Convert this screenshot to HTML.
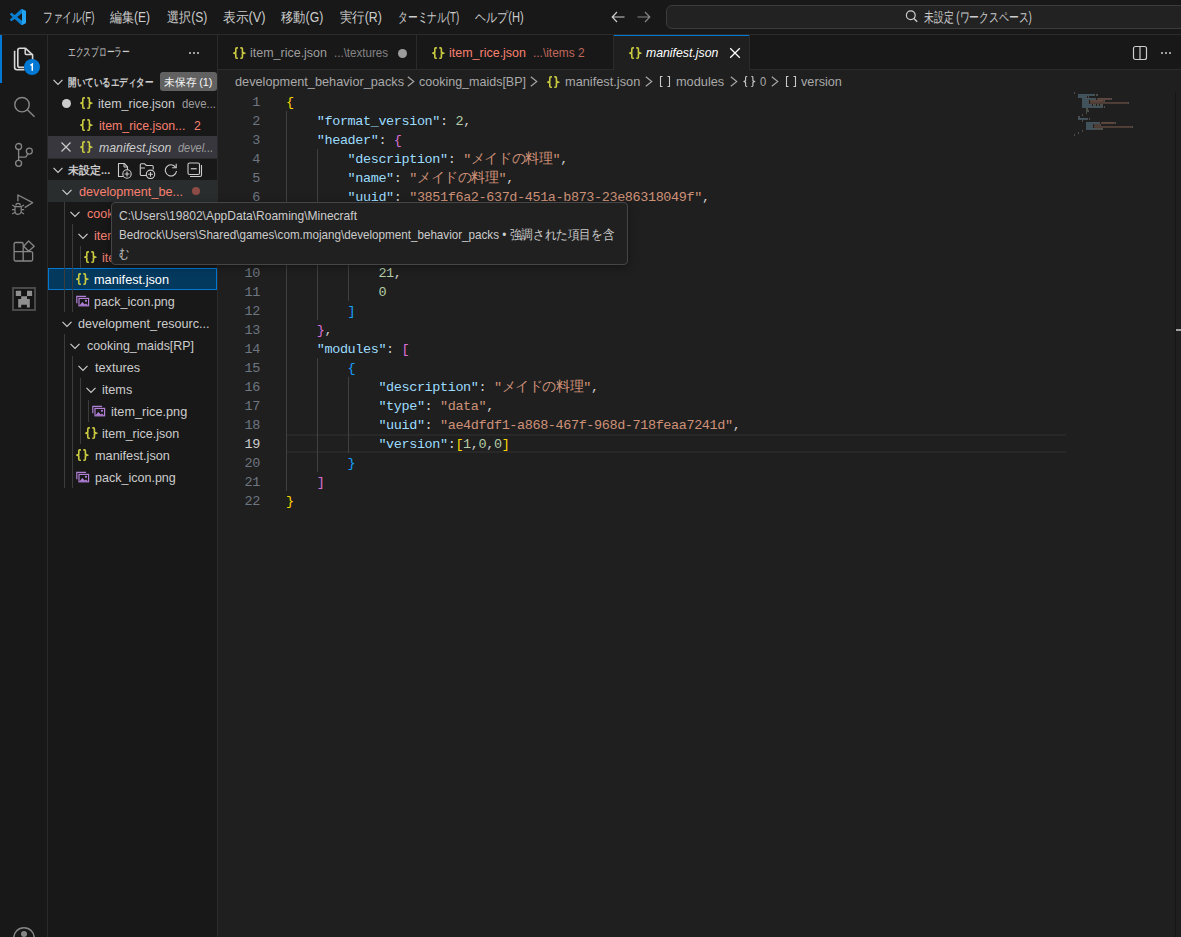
<!DOCTYPE html>
<html><head><meta charset="utf-8"><style>
html,body{margin:0;padding:0;width:1181px;height:937px;overflow:hidden;background:#1f1f1f}
.a{position:absolute}
.t{white-space:pre}
.code{font:13.5px 'Liberation Mono', monospace;letter-spacing:-0.4px;line-height:19px;height:19px;white-space:pre;margin-top:1px}
</style></head><body>
<div class="a" style="left:0px;top:0px;width:1181px;height:35px;background:#181818;"></div>
<div class="a" style="left:0px;top:34px;width:1181px;height:1px;background:#2b2b2b;"></div>
<div class="a" style="left:0px;top:35px;width:47px;height:902px;background:#181818;"></div>
<div class="a" style="left:47px;top:35px;width:1px;height:902px;background:#2b2b2b;"></div>
<div class="a" style="left:48px;top:35px;width:169px;height:902px;background:#181818;"></div>
<div class="a" style="left:217px;top:35px;width:1px;height:902px;background:#2b2b2b;"></div>
<div class="a" style="left:218px;top:35px;width:963px;height:902px;background:#1f1f1f;"></div>
<svg class="a" style="left:10px;top:9px;" width="16" height="16" viewBox="0 0 16 16"><g transform="scale(0.16)"><path d="M96.46 10.8 L75.86 0.87 C73.47 -0.28 70.62 0.2 68.75 2.07 L29.27 38.1 L12.07 25.05 C10.47 23.83 8.23 23.93 6.74 25.28 L1.23 30.29 C-0.58 31.94 -0.58 34.8 1.23 36.45 L16.14 50.05 L1.23 63.65 C-0.58 65.3 -0.58 68.16 1.23 69.81 L6.74 74.82 C8.23 76.17 10.47 76.27 12.07 75.05 L29.27 62 L68.75 98.03 C70.62 99.9 73.47 100.38 75.86 99.23 L96.46 89.3 C98.62 88.26 100 86.07 100 83.67 V16.43 C100 14.03 98.62 11.84 96.46 10.8 Z M75.02 27.3 L45.07 50.05 L75.02 72.8 Z" fill="#0a7fd0" fill-rule="evenodd"/><path d="M75.86 0.87 L96.46 10.8 C98.62 11.84 100 14.03 100 16.43 V83.67 C100 86.07 98.62 88.26 96.46 89.3 L75.86 99.23 C73.47 100.38 70.62 99.9 68.75 98.03 C71.1 100.4 75.02 98.7 75.02 95.4 V4.7 C75.02 1.4 71.1 -0.3 68.75 2.07 Z" fill="#22a4f2"/></g></svg>
<div class="a t" style="left:42.6px;top:0px;height:35px;font:normal normal 14px 'Liberation Sans', sans-serif;line-height:35px;color:#cccccc;transform:scaleX(0.6958);transform-origin:0 0;">ファイル(F)</div>
<div class="a t" style="left:110px;top:0px;height:35px;font:normal normal 14px 'Liberation Sans', sans-serif;line-height:35px;color:#cccccc;transform:scaleX(0.8572);transform-origin:0 0;">編集(E)</div>
<div class="a t" style="left:166.7px;top:0px;height:35px;font:normal normal 14px 'Liberation Sans', sans-serif;line-height:35px;color:#cccccc;transform:scaleX(0.8637);transform-origin:0 0;">選択(S)</div>
<div class="a t" style="left:223px;top:0px;height:35px;font:normal normal 14px 'Liberation Sans', sans-serif;line-height:35px;color:#cccccc;transform:scaleX(0.9108);transform-origin:0 0;">表示(V)</div>
<div class="a t" style="left:281.4px;top:0px;height:35px;font:normal normal 14px 'Liberation Sans', sans-serif;line-height:35px;color:#cccccc;transform:scaleX(0.8773);transform-origin:0 0;">移動(G)</div>
<div class="a t" style="left:339.7px;top:0px;height:35px;font:normal normal 14px 'Liberation Sans', sans-serif;line-height:35px;color:#cccccc;transform:scaleX(0.8833);transform-origin:0 0;">実行(R)</div>
<div class="a t" style="left:398px;top:0px;height:35px;font:normal normal 14px 'Liberation Sans', sans-serif;line-height:35px;color:#cccccc;transform:scaleX(0.6976);transform-origin:0 0;">ターミナル(T)</div>
<div class="a t" style="left:474.6px;top:0px;height:35px;font:normal normal 14px 'Liberation Sans', sans-serif;line-height:35px;color:#cccccc;transform:scaleX(0.7927);transform-origin:0 0;">ヘルプ(H)</div>
<svg class="a" style="left:611px;top:11px;" width="14" height="12" viewBox="0 0 14 12"><path d="M6 1 L1.2 6 L6 11 M1.5 6 H13.5" stroke="#cccccc" stroke-width="1.2" fill="none"/></svg>
<svg class="a" style="left:637px;top:11px;" width="14" height="12" viewBox="0 0 14 12"><path d="M8 1 L12.8 6 L8 11 M12.5 6 H0.5" stroke="#868686" stroke-width="1.2" fill="none"/></svg>
<div class="a" style="left:666px;top:5px;width:560px;height:24px;background:#222222;border:1px solid #3b3b3b;border-radius:6px;box-sizing:border-box;"></div>
<svg class="a" style="left:904px;top:10px;transform:scaleX(-1);" width="14" height="13" viewBox="0 0 14 13"><circle cx="7.2" cy="5.3" r="4.4" stroke="#cccccc" stroke-width="1.2" fill="none"/><path d="M4.1 8.4 L0.8 11.7" stroke="#cccccc" stroke-width="1.4"/></svg>
<div class="a t" style="left:924px;top:5px;height:24px;font:normal normal 14px 'Liberation Sans', sans-serif;line-height:24px;color:#cccccc;transform:scaleX(0.7029);transform-origin:0 0;">未設定 (ワークスペース)</div>
<div class="a" style="left:0px;top:35px;width:2px;height:48px;background:#0078d4;"></div>
<svg class="a" style="left:8px;top:42px;" width="34" height="36" viewBox="0 0 34 36"><path d="M9.8 16 V8.3 a2 2 0 0 1 2 -2 H17.6 L24.6 12.8 V18 M9.8 16 V23.4 a2 2 0 0 0 2 2 H16" stroke="#d7d7d7" stroke-width="1.6" fill="none" stroke-linejoin="round"/><path d="M17.2 6.3 V11.6 a1 1 0 0 0 1 1 H24.6" stroke="#d7d7d7" stroke-width="1.5" fill="none"/><path d="M6.6 8.8 V25.3 a2.5 2.5 0 0 0 2.5 2.5 H16.5" stroke="#d7d7d7" stroke-width="1.6" fill="none"/><circle cx="24" cy="25" r="8" fill="#0078d4"/><path d="M22.4 23.4 L24.3 22.2 V28.7" stroke="#ffffff" stroke-width="1.5" fill="none"/></svg>
<svg class="a" style="left:12px;top:95px;" width="24" height="24" viewBox="0 0 24 24"><circle cx="10" cy="9.7" r="7.2" stroke="#868686" stroke-width="1.4" fill="none"/><path d="M15.3 14.8 L22.5 21.8" stroke="#868686" stroke-width="1.5"/></svg>
<svg class="a" style="left:12px;top:141px;" width="24" height="26" viewBox="0 0 24 26"><circle cx="6.6" cy="5.5" r="3" stroke="#868686" stroke-width="1.3" fill="none"/><circle cx="6.6" cy="22.3" r="3" stroke="#868686" stroke-width="1.3" fill="none"/><circle cx="17.3" cy="10.1" r="3" stroke="#868686" stroke-width="1.3" fill="none"/><path d="M6.6 8.5 V19.3 M15.8 12.7 L14.6 14.9 a2 2 0 0 1 -1.8 1.2 H6.6" stroke="#868686" stroke-width="1.3" fill="none"/></svg>
<svg class="a" style="left:11px;top:193px;" width="24" height="24" viewBox="0 0 24 24"><path d="M6.9 8.3 V2 L21.6 9.7 L13.7 14.6" stroke="#868686" stroke-width="1.3" fill="none" stroke-linejoin="round"/><path d="M4.8 12.6 a2.3 2.3 0 0 1 4.6 0 M4 13.6 H10.2 V18.2 a3.1 3.1 0 0 1 -6.2 0 Z" stroke="#868686" stroke-width="1.2" fill="none"/><path d="M1.2 12 L4 13.8 M13 12 L10.2 13.8 M1 16.6 H4 M13.2 16.6 H10.2 M1.2 21 L4 19.3 M13 21 L10.2 19.3" stroke="#868686" stroke-width="1.1" fill="none"/></svg>
<svg class="a" style="left:12px;top:239px;" width="24" height="24" viewBox="0 0 24 24"><path d="M11.2 12.6 V4.9 a1.4 1.4 0 0 0 -1.4 -1.4 H3.5 a1.4 1.4 0 0 0 -1.4 1.4 V20.6 a1.4 1.4 0 0 0 1.4 1.4 H19.2 a1.4 1.4 0 0 0 1.4 -1.4 V14 a1.4 1.4 0 0 0 -1.4 -1.4 H2.1 M11.2 12.6 V22" stroke="#868686" stroke-width="1.3" fill="none"/><path d="M16.6 2 L22.2 7.3 L16.6 12.2 L11.7 7.3 Z" stroke="#868686" stroke-width="1.3" fill="none" stroke-linejoin="round"/></svg>
<svg class="a" style="left:12px;top:287px;" width="24" height="24" viewBox="0 0 24 24"><rect x="1" y="1" width="22" height="22" stroke="#4a4a4a" stroke-width="2" fill="#141414"/><path d="M3.8 3.7 H9.1 V9 H3.8 Z M15 3.7 H20.1 V9 H15 Z M9.2 9.3 H15 V12 H17.8 V20.4 H14.9 V17.7 H9.2 V20.4 H6.2 V12 H9.2 Z" fill="#8f8f8f"/></svg>
<svg class="a" style="left:12px;top:925px;" width="24" height="12" viewBox="0 0 24 12"><circle cx="12" cy="13" r="10.3" stroke="#868686" stroke-width="1.5" fill="none"/><circle cx="12" cy="9" r="3" fill="#868686"/></svg>
<div class="a t" style="left:68.3px;top:35px;height:35px;font:normal normal 12px 'Liberation Sans', sans-serif;line-height:35px;color:#cccccc;transform:scaleX(0.6458);transform-origin:0 0;">エクスプローラー</div>
<div class="a" style="left:189px;top:52px;width:2px;height:2px;background:#cccccc;border-radius:1px;"></div>
<div class="a" style="left:193px;top:52px;width:2px;height:2px;background:#cccccc;border-radius:1px;"></div>
<div class="a" style="left:197px;top:52px;width:2px;height:2px;background:#cccccc;border-radius:1px;"></div>
<svg class="a" style="left:49.7px;top:73.5px;" width="16" height="16" viewBox="0 0 16 16"><path d="M3.5 5.8 L8 10.3 L12.5 5.8" stroke="#cccccc" stroke-width="1.2" fill="none"/></svg>
<div class="a t" style="left:68.3px;top:71px;height:22px;font:normal bold 11px 'Liberation Sans', sans-serif;line-height:22px;color:#cccccc;transform:scaleX(0.7764);transform-origin:0 0;">開いているエディター</div>
<div class="a" style="left:160px;top:72px;width:57px;height:19px;background:#616161;border-radius:3px;"></div>
<div class="a t" style="left:164.4px;top:72.5px;height:19px;font:normal normal 11px 'Liberation Sans', sans-serif;line-height:19px;color:#f8f8f8;transform:scaleX(0.9778);transform-origin:0 0;">未保存 (1)</div>
<div class="a" style="left:61.5px;top:98.5px;width:9px;height:9px;border-radius:5px;background:#cccccc"></div>
<svg class="a" style="left:80.3px;top:97px;" width="13" height="13" viewBox="0 0 13 13"><path d="M4.9 0.9 H3.8 Q2.8 0.9 2.8 1.9 V5.2 L0.9 6.1 L2.8 7 V10.3 Q2.8 11.3 3.8 11.3 H4.9 M7.3 0.9 H8.4 Q9.4 0.9 9.4 1.9 V5.2 L11.3 6.1 L9.4 7 V10.3 Q9.4 11.3 8.4 11.3 H7.3" stroke="#cbcb41" stroke-width="1.6" fill="none" stroke-linejoin="miter"/></svg>
<div class="a t" style="left:98.4px;top:93px;height:22px;font:normal normal 13px 'Liberation Sans', sans-serif;line-height:22px;color:#cccccc;transform:scaleX(0.9601);transform-origin:0 0;">item_rice.json</div>
<div class="a t" style="left:181.9px;top:93px;height:22px;font:normal normal 12px 'Liberation Sans', sans-serif;line-height:22px;color:#9d9d9d;transform:scaleX(0.9438);transform-origin:0 0;">deve...</div>
<svg class="a" style="left:80.3px;top:119px;" width="13" height="13" viewBox="0 0 13 13"><path d="M4.9 0.9 H3.8 Q2.8 0.9 2.8 1.9 V5.2 L0.9 6.1 L2.8 7 V10.3 Q2.8 11.3 3.8 11.3 H4.9 M7.3 0.9 H8.4 Q9.4 0.9 9.4 1.9 V5.2 L11.3 6.1 L9.4 7 V10.3 Q9.4 11.3 8.4 11.3 H7.3" stroke="#cbcb41" stroke-width="1.6" fill="none" stroke-linejoin="miter"/></svg>
<div class="a t" style="left:98.6px;top:115px;height:22px;font:normal normal 13px 'Liberation Sans', sans-serif;line-height:22px;color:#f88070;transform:scaleX(0.9491);transform-origin:0 0;">item_rice.json...</div>
<div class="a t" style="left:194.2px;top:115px;height:22px;font:normal normal 12px 'Liberation Sans', sans-serif;line-height:22px;color:#f88070;transform:scaleX(1.0189);transform-origin:0 0;">2</div>
<div class="a" style="left:48px;top:136px;width:169px;height:22px;background:#37373d;"></div>
<svg class="a" style="left:60px;top:141px;" width="12" height="12" viewBox="0 0 12 12"><path d="M1.5 1.5 L10.5 10.5 M10.5 1.5 L1.5 10.5" stroke="#cccccc" stroke-width="1.2"/></svg>
<svg class="a" style="left:80.3px;top:141px;" width="13" height="13" viewBox="0 0 13 13"><path d="M4.9 0.9 H3.8 Q2.8 0.9 2.8 1.9 V5.2 L0.9 6.1 L2.8 7 V10.3 Q2.8 11.3 3.8 11.3 H4.9 M7.3 0.9 H8.4 Q9.4 0.9 9.4 1.9 V5.2 L11.3 6.1 L9.4 7 V10.3 Q9.4 11.3 8.4 11.3 H7.3" stroke="#cbcb41" stroke-width="1.6" fill="none" stroke-linejoin="miter"/></svg>
<div class="a t" style="left:98.6px;top:137px;height:22px;font:italic normal 13px 'Liberation Sans', sans-serif;line-height:22px;color:#cccccc;transform:scaleX(0.9453);transform-origin:0 0;">manifest.json</div>
<div class="a t" style="left:177.5px;top:137px;height:22px;font:italic normal 12px 'Liberation Sans', sans-serif;line-height:22px;color:#9d9d9d;transform:scaleX(0.9098);transform-origin:0 0;">devel...</div>
<div class="a" style="left:48px;top:158px;width:169px;height:1px;background:#2b2b2b;"></div>
<svg class="a" style="left:49.7px;top:161.5px;" width="16" height="16" viewBox="0 0 16 16"><path d="M3.5 5.8 L8 10.3 L12.5 5.8" stroke="#cccccc" stroke-width="1.2" fill="none"/></svg>
<div class="a t" style="left:68.3px;top:159px;height:22px;font:normal bold 11px 'Liberation Sans', sans-serif;line-height:22px;color:#cccccc;transform:scaleX(1.0007);transform-origin:0 0;">未設定...</div>
<svg class="a" style="left:117px;top:162px;" width="16" height="17" viewBox="0 0 16 17"><path d="M6 14.5 H1.5 V1.5 H7.2 L10.5 4.8 V8" stroke="#cccccc" stroke-width="1.1" fill="none" stroke-linejoin="round"/><path d="M7 1.5 V5 H10.5" stroke="#cccccc" stroke-width="1" fill="none"/><circle cx="10" cy="12" r="4.2" fill="#181818" stroke="#cccccc" stroke-width="1.1"/><path d="M10 9.6 V14.4 M7.6 12 H12.4" stroke="#cccccc" stroke-width="1.1"/></svg>
<svg class="a" style="left:139px;top:162px;" width="18" height="17" viewBox="0 0 18 17"><path d="M7 13.5 H2.5 a1.2 1.2 0 0 1 -1.2 -1.2 V3 a1.2 1.2 0 0 1 1.2 -1.2 H5.5 L7.3 3.5 H13 a1.2 1.2 0 0 1 1.2 1.2 V7.5" stroke="#cccccc" stroke-width="1.1" fill="none"/><path d="M1.5 6 H6" stroke="#cccccc" stroke-width="1"/><circle cx="11.5" cy="12.3" r="4.2" fill="#181818" stroke="#cccccc" stroke-width="1.1"/><path d="M11.5 9.9 V14.7 M9.1 12.3 H13.9" stroke="#cccccc" stroke-width="1.1"/></svg>
<svg class="a" style="left:164px;top:163px;" width="14" height="14" viewBox="0 0 14 14"><path d="M11.6 4.3 A5.6 5.6 0 1 0 12.5 8" stroke="#cccccc" stroke-width="1.1" fill="none"/><path d="M12.2 0.8 V4.8 H8.2" stroke="#cccccc" stroke-width="1.1" fill="none"/></svg>
<svg class="a" style="left:187px;top:162px;" width="16" height="16" viewBox="0 0 16 16"><rect x="1" y="1" width="11.5" height="11.5" rx="1.5" stroke="#cccccc" stroke-width="1.1" fill="none"/><path d="M14.5 3 V13 A1.5 1.5 0 0 1 13 14.5 H3" stroke="#cccccc" stroke-width="1.1" fill="none"/><path d="M3.8 6.75 H9.7" stroke="#cccccc" stroke-width="1.2"/></svg>
<div class="a" style="left:48px;top:180px;width:169px;height:22px;background:#2a2d2e;"></div>
<svg class="a" style="left:59.400000000000006px;top:183.5px;" width="16" height="16" viewBox="0 0 16 16"><path d="M3.5 5.8 L8 10.3 L12.5 5.8" stroke="#cccccc" stroke-width="1.2" fill="none"/></svg>
<div class="a t" style="left:78.8px;top:181px;height:22px;font:normal normal 13px 'Liberation Sans', sans-serif;line-height:22px;color:#f88070;transform:scaleX(0.9723);transform-origin:0 0;">development_be...</div>
<div class="a" style="left:192px;top:187px;width:8px;height:8px;border-radius:4px;background:#8c4c45"></div>
<svg class="a" style="left:66.9px;top:205.5px;" width="16" height="16" viewBox="0 0 16 16"><path d="M3.5 5.8 L8 10.3 L12.5 5.8" stroke="#cccccc" stroke-width="1.2" fill="none"/></svg>
<div class="a t" style="left:86.6px;top:203px;height:22px;font:normal normal 13px 'Liberation Sans', sans-serif;line-height:22px;color:#f88070;transform:scaleX(0.9615);transform-origin:0 0;">cooking_maids[BP]</div>
<svg class="a" style="left:75px;top:227.5px;" width="16" height="16" viewBox="0 0 16 16"><path d="M3.5 5.8 L8 10.3 L12.5 5.8" stroke="#cccccc" stroke-width="1.2" fill="none"/></svg>
<div class="a t" style="left:94.3px;top:225px;height:22px;font:normal normal 13px 'Liberation Sans', sans-serif;line-height:22px;color:#f88070;transform:scaleX(0.9723);transform-origin:0 0;">items</div>
<svg class="a" style="left:84.4px;top:251px;" width="13" height="13" viewBox="0 0 13 13"><path d="M4.9 0.9 H3.8 Q2.8 0.9 2.8 1.9 V5.2 L0.9 6.1 L2.8 7 V10.3 Q2.8 11.3 3.8 11.3 H4.9 M7.3 0.9 H8.4 Q9.4 0.9 9.4 1.9 V5.2 L11.3 6.1 L9.4 7 V10.3 Q9.4 11.3 8.4 11.3 H7.3" stroke="#cbcb41" stroke-width="1.6" fill="none" stroke-linejoin="miter"/></svg>
<div class="a t" style="left:102.2px;top:247px;height:22px;font:normal normal 13px 'Liberation Sans', sans-serif;line-height:22px;color:#f88070;transform:scaleX(0.9601);transform-origin:0 0;">item_rice.json</div>
<div class="a" style="left:48px;top:268px;width:169px;height:22px;background:#04395e;border:1px solid #0078d4;box-sizing:border-box;"></div>
<svg class="a" style="left:76.3px;top:273px;" width="13" height="13" viewBox="0 0 13 13"><path d="M4.9 0.9 H3.8 Q2.8 0.9 2.8 1.9 V5.2 L0.9 6.1 L2.8 7 V10.3 Q2.8 11.3 3.8 11.3 H4.9 M7.3 0.9 H8.4 Q9.4 0.9 9.4 1.9 V5.2 L11.3 6.1 L9.4 7 V10.3 Q9.4 11.3 8.4 11.3 H7.3" stroke="#cbcb41" stroke-width="1.6" fill="none" stroke-linejoin="miter"/></svg>
<div class="a t" style="left:94.4px;top:269px;height:22px;font:normal normal 13px 'Liberation Sans', sans-serif;line-height:22px;color:#ffffff;transform:scaleX(0.9792);transform-origin:0 0;">manifest.json</div>
<svg class="a" style="left:75.7px;top:295px;" width="14" height="13" viewBox="0 0 14 13"><path d="M0.8 8.2 V1.4 H10" stroke="#b07fd6" stroke-width="1.2" fill="none"/><rect x="3" y="3.4" width="9.6" height="7.4" stroke="#b07fd6" stroke-width="1.2" fill="none"/><path d="M3.4 10.6 L6.3 6.9 L8.8 9.6 L10 8.5 L12.4 10.6 Z" fill="#b07fd6"/><circle cx="10" cy="5.8" r="1.1" fill="#b07fd6"/></svg>
<div class="a t" style="left:94.4px;top:291px;height:22px;font:normal normal 13px 'Liberation Sans', sans-serif;line-height:22px;color:#cccccc;transform:scaleX(0.9637);transform-origin:0 0;">pack_icon.png</div>
<div class="a" style="left:64px;top:202px;width:1px;height:110px;background:#3c3c3c;"></div>
<div class="a" style="left:72px;top:224px;width:1px;height:88px;background:#3c3c3c;"></div>
<div class="a" style="left:80px;top:246px;width:1px;height:22px;background:#3c3c3c;"></div>
<svg class="a" style="left:58.599999999999994px;top:315.5px;" width="16" height="16" viewBox="0 0 16 16"><path d="M3.5 5.8 L8 10.3 L12.5 5.8" stroke="#cccccc" stroke-width="1.2" fill="none"/></svg>
<div class="a t" style="left:78.4px;top:313px;height:22px;font:normal normal 13px 'Liberation Sans', sans-serif;line-height:22px;color:#cccccc;transform:scaleX(0.9687);transform-origin:0 0;">development_resourc...</div>
<svg class="a" style="left:66.9px;top:337.5px;" width="16" height="16" viewBox="0 0 16 16"><path d="M3.5 5.8 L8 10.3 L12.5 5.8" stroke="#cccccc" stroke-width="1.2" fill="none"/></svg>
<div class="a t" style="left:86.5px;top:335px;height:22px;font:normal normal 13px 'Liberation Sans', sans-serif;line-height:22px;color:#cccccc;transform:scaleX(0.9554);transform-origin:0 0;">cooking_maids[RP]</div>
<svg class="a" style="left:75px;top:359.5px;" width="16" height="16" viewBox="0 0 16 16"><path d="M3.5 5.8 L8 10.3 L12.5 5.8" stroke="#cccccc" stroke-width="1.2" fill="none"/></svg>
<div class="a t" style="left:94.5px;top:357px;height:22px;font:normal normal 13px 'Liberation Sans', sans-serif;line-height:22px;color:#cccccc;transform:scaleX(0.9775);transform-origin:0 0;">textures</div>
<svg class="a" style="left:82.9px;top:381.5px;" width="16" height="16" viewBox="0 0 16 16"><path d="M3.5 5.8 L8 10.3 L12.5 5.8" stroke="#cccccc" stroke-width="1.2" fill="none"/></svg>
<div class="a t" style="left:102.4px;top:379px;height:22px;font:normal normal 13px 'Liberation Sans', sans-serif;line-height:22px;color:#cccccc;transform:scaleX(0.9723);transform-origin:0 0;">items</div>
<svg class="a" style="left:91.8px;top:405px;" width="14" height="13" viewBox="0 0 14 13"><path d="M0.8 8.2 V1.4 H10" stroke="#b07fd6" stroke-width="1.2" fill="none"/><rect x="3" y="3.4" width="9.6" height="7.4" stroke="#b07fd6" stroke-width="1.2" fill="none"/><path d="M3.4 10.6 L6.3 6.9 L8.8 9.6 L10 8.5 L12.4 10.6 Z" fill="#b07fd6"/><circle cx="10" cy="5.8" r="1.1" fill="#b07fd6"/></svg>
<div class="a t" style="left:110.5px;top:401px;height:22px;font:normal normal 13px 'Liberation Sans', sans-serif;line-height:22px;color:#cccccc;transform:scaleX(0.9764);transform-origin:0 0;">item_rice.png</div>
<svg class="a" style="left:84.5px;top:427px;" width="13" height="13" viewBox="0 0 13 13"><path d="M4.9 0.9 H3.8 Q2.8 0.9 2.8 1.9 V5.2 L0.9 6.1 L2.8 7 V10.3 Q2.8 11.3 3.8 11.3 H4.9 M7.3 0.9 H8.4 Q9.4 0.9 9.4 1.9 V5.2 L11.3 6.1 L9.4 7 V10.3 Q9.4 11.3 8.4 11.3 H7.3" stroke="#cbcb41" stroke-width="1.6" fill="none" stroke-linejoin="miter"/></svg>
<div class="a t" style="left:102.4px;top:423px;height:22px;font:normal normal 13px 'Liberation Sans', sans-serif;line-height:22px;color:#cccccc;transform:scaleX(0.9626);transform-origin:0 0;">item_rice.json</div>
<svg class="a" style="left:76.3px;top:449px;" width="13" height="13" viewBox="0 0 13 13"><path d="M4.9 0.9 H3.8 Q2.8 0.9 2.8 1.9 V5.2 L0.9 6.1 L2.8 7 V10.3 Q2.8 11.3 3.8 11.3 H4.9 M7.3 0.9 H8.4 Q9.4 0.9 9.4 1.9 V5.2 L11.3 6.1 L9.4 7 V10.3 Q9.4 11.3 8.4 11.3 H7.3" stroke="#cbcb41" stroke-width="1.6" fill="none" stroke-linejoin="miter"/></svg>
<div class="a t" style="left:94.5px;top:445px;height:22px;font:normal normal 13px 'Liberation Sans', sans-serif;line-height:22px;color:#cccccc;transform:scaleX(0.9779);transform-origin:0 0;">manifest.json</div>
<svg class="a" style="left:75.7px;top:471px;" width="14" height="13" viewBox="0 0 14 13"><path d="M0.8 8.2 V1.4 H10" stroke="#b07fd6" stroke-width="1.2" fill="none"/><rect x="3" y="3.4" width="9.6" height="7.4" stroke="#b07fd6" stroke-width="1.2" fill="none"/><path d="M3.4 10.6 L6.3 6.9 L8.8 9.6 L10 8.5 L12.4 10.6 Z" fill="#b07fd6"/><circle cx="10" cy="5.8" r="1.1" fill="#b07fd6"/></svg>
<div class="a t" style="left:94.5px;top:467px;height:22px;font:normal normal 13px 'Liberation Sans', sans-serif;line-height:22px;color:#cccccc;transform:scaleX(0.9637);transform-origin:0 0;">pack_icon.png</div>
<div class="a" style="left:64px;top:334px;width:1px;height:154px;background:#3c3c3c;"></div>
<div class="a" style="left:72px;top:356px;width:1px;height:132px;background:#3c3c3c;"></div>
<div class="a" style="left:80px;top:378px;width:1px;height:66px;background:#3c3c3c;"></div>
<div class="a" style="left:88px;top:400px;width:1px;height:22px;background:#3c3c3c;"></div>
<div class="a" style="left:218px;top:35px;width:963px;height:34px;background:#181818;"></div>
<div class="a" style="left:218px;top:69px;width:963px;height:1px;background:#2b2b2b;"></div>
<div class="a" style="left:416px;top:35px;width:1px;height:34px;background:#2b2b2b;"></div>
<div class="a" style="left:613px;top:35px;width:1px;height:34px;background:#2b2b2b;"></div>
<div class="a" style="left:614px;top:35px;width:135px;height:35px;background:#1f1f1f;"></div>
<div class="a" style="left:614px;top:35px;width:135px;height:1px;background:#0078d4;"></div>
<div class="a" style="left:749px;top:35px;width:1px;height:34px;background:#2b2b2b;"></div>
<svg class="a" style="left:232.5px;top:46.5px;" width="13" height="13" viewBox="0 0 13 13"><path d="M4.9 0.9 H3.8 Q2.8 0.9 2.8 1.9 V5.2 L0.9 6.1 L2.8 7 V10.3 Q2.8 11.3 3.8 11.3 H4.9 M7.3 0.9 H8.4 Q9.4 0.9 9.4 1.9 V5.2 L11.3 6.1 L9.4 7 V10.3 Q9.4 11.3 8.4 11.3 H7.3" stroke="#cbcb41" stroke-width="1.6" fill="none" stroke-linejoin="miter"/></svg>
<div class="a t" style="left:250px;top:36px;height:34px;font:normal normal 13px 'Liberation Sans', sans-serif;line-height:34px;color:#9d9d9d;transform:scaleX(0.9601);transform-origin:0 0;">item_rice.json</div>
<div class="a t" style="left:334px;top:36px;height:34px;font:normal normal 12px 'Liberation Sans', sans-serif;line-height:34px;color:#848484;transform:scaleX(0.9639);transform-origin:0 0;">...\textures</div>
<div class="a" style="left:398px;top:48.5px;width:9px;height:9px;border-radius:5px;background:#9d9d9d"></div>
<svg class="a" style="left:432px;top:46.5px;" width="13" height="13" viewBox="0 0 13 13"><path d="M4.9 0.9 H3.8 Q2.8 0.9 2.8 1.9 V5.2 L0.9 6.1 L2.8 7 V10.3 Q2.8 11.3 3.8 11.3 H4.9 M7.3 0.9 H8.4 Q9.4 0.9 9.4 1.9 V5.2 L11.3 6.1 L9.4 7 V10.3 Q9.4 11.3 8.4 11.3 H7.3" stroke="#cbcb41" stroke-width="1.6" fill="none" stroke-linejoin="miter"/></svg>
<div class="a t" style="left:449.4px;top:36px;height:34px;font:normal normal 13px 'Liberation Sans', sans-serif;line-height:34px;color:#f88070;transform:scaleX(0.9601);transform-origin:0 0;">item_rice.json</div>
<div class="a t" style="left:533px;top:36px;height:34px;font:normal normal 12px 'Liberation Sans', sans-serif;line-height:34px;color:#c0685c;transform:scaleX(0.9901);transform-origin:0 0;">...\items 2</div>
<svg class="a" style="left:628.7px;top:46.5px;" width="13" height="13" viewBox="0 0 13 13"><path d="M4.9 0.9 H3.8 Q2.8 0.9 2.8 1.9 V5.2 L0.9 6.1 L2.8 7 V10.3 Q2.8 11.3 3.8 11.3 H4.9 M7.3 0.9 H8.4 Q9.4 0.9 9.4 1.9 V5.2 L11.3 6.1 L9.4 7 V10.3 Q9.4 11.3 8.4 11.3 H7.3" stroke="#cbcb41" stroke-width="1.6" fill="none" stroke-linejoin="miter"/></svg>
<div class="a t" style="left:646.3px;top:36px;height:34px;font:italic normal 13px 'Liberation Sans', sans-serif;line-height:34px;color:#ffffff;transform:scaleX(0.9440);transform-origin:0 0;">manifest.json</div>
<svg class="a" style="left:729px;top:47px;" width="12" height="12" viewBox="0 0 12 12"><path d="M1.2 1.2 L10.8 10.8 M10.8 1.2 L1.2 10.8" stroke="#ffffff" stroke-width="1.3"/></svg>
<svg class="a" style="left:1132px;top:45px;" width="16" height="16" viewBox="0 0 16 16"><rect x="1.5" y="1.5" width="13" height="13" rx="2" stroke="#cccccc" stroke-width="1.2" fill="none"/><path d="M8 1.5 V14.5" stroke="#cccccc" stroke-width="1.2"/></svg>
<div class="a" style="left:1161px;top:52px;width:2px;height:2px;background:#cccccc;border-radius:1px;"></div>
<div class="a" style="left:1165px;top:52px;width:2px;height:2px;background:#cccccc;border-radius:1px;"></div>
<div class="a" style="left:1169px;top:52px;width:2px;height:2px;background:#cccccc;border-radius:1px;"></div>
<div class="a t" style="left:234.5px;top:71px;height:22px;font:normal normal 13px 'Liberation Sans', sans-serif;line-height:22px;color:#a9a9a9;transform:scaleX(0.9784);transform-origin:0 0;">development_behavior_packs</div>
<div class="a t" style="left:419px;top:71px;height:22px;font:normal normal 13px 'Liberation Sans', sans-serif;line-height:22px;color:#a9a9a9;transform:scaleX(0.9615);transform-origin:0 0;">cooking_maids[BP]</div>
<div class="a t" style="left:565px;top:71px;height:22px;font:normal normal 13px 'Liberation Sans', sans-serif;line-height:22px;color:#a9a9a9;transform:scaleX(0.9831);transform-origin:0 0;">manifest.json</div>
<div class="a t" style="left:675.8px;top:71px;height:22px;font:normal normal 13px 'Liberation Sans', sans-serif;line-height:22px;color:#a9a9a9;transform:scaleX(0.9809);transform-origin:0 0;">modules</div>
<div class="a t" style="left:759.5px;top:71px;height:22px;font:normal normal 13px 'Liberation Sans', sans-serif;line-height:22px;color:#a9a9a9;transform:scaleX(0.8575);transform-origin:0 0;">0</div>
<div class="a t" style="left:801.4px;top:71px;height:22px;font:normal normal 13px 'Liberation Sans', sans-serif;line-height:22px;color:#a9a9a9;transform:scaleX(0.9760);transform-origin:0 0;">version</div>
<svg class="a" style="left:406.7px;top:75.5px;" width="8" height="12" viewBox="0 0 8 12"><path d="M0.8 0.8 L6.8 5.5 L0.8 10.2" stroke="#a9a9a9" stroke-width="1.1" fill="none"/></svg>
<svg class="a" style="left:529.7px;top:75.5px;" width="8" height="12" viewBox="0 0 8 12"><path d="M0.8 0.8 L6.8 5.5 L0.8 10.2" stroke="#a9a9a9" stroke-width="1.1" fill="none"/></svg>
<svg class="a" style="left:644.9000000000001px;top:75.5px;" width="8" height="12" viewBox="0 0 8 12"><path d="M0.8 0.8 L6.8 5.5 L0.8 10.2" stroke="#a9a9a9" stroke-width="1.1" fill="none"/></svg>
<svg class="a" style="left:729.8000000000001px;top:75.5px;" width="8" height="12" viewBox="0 0 8 12"><path d="M0.8 0.8 L6.8 5.5 L0.8 10.2" stroke="#a9a9a9" stroke-width="1.1" fill="none"/></svg>
<svg class="a" style="left:771.1px;top:75.5px;" width="8" height="12" viewBox="0 0 8 12"><path d="M0.8 0.8 L6.8 5.5 L0.8 10.2" stroke="#a9a9a9" stroke-width="1.1" fill="none"/></svg>
<svg class="a" style="left:547px;top:75.5px;" width="13" height="13" viewBox="0 0 13 13"><path d="M4.9 0.9 H3.8 Q2.8 0.9 2.8 1.9 V5.2 L0.9 6.1 L2.8 7 V10.3 Q2.8 11.3 3.8 11.3 H4.9 M7.3 0.9 H8.4 Q9.4 0.9 9.4 1.9 V5.2 L11.3 6.1 L9.4 7 V10.3 Q9.4 11.3 8.4 11.3 H7.3" stroke="#cbcb41" stroke-width="1.6" fill="none" stroke-linejoin="miter"/></svg>
<svg class="a" style="left:658.8px;top:75px;" width="12" height="13" viewBox="0 0 12 13"><path d="M3.5 1.5 H1.5 V11.5 H3.5 M8.5 1.5 H10.5 V11.5 H8.5" stroke="#c8c8c8" stroke-width="1.1" fill="none"/></svg>
<svg class="a" style="left:784.8px;top:75px;" width="12" height="13" viewBox="0 0 12 13"><path d="M3.5 1.5 H1.5 V11.5 H3.5 M8.5 1.5 H10.5 V11.5 H8.5" stroke="#c8c8c8" stroke-width="1.1" fill="none"/></svg>
<svg class="a" style="left:742.6px;top:75px;" width="13" height="13" viewBox="0 0 13 13"><path d="M4.2 1.5 H3.5 Q2.6 1.5 2.6 2.4 V5.6 L1 6.5 L2.6 7.4 V10.6 Q2.6 11.5 3.5 11.5 H4.2 M8.3 1.5 H9 Q9.9 1.5 9.9 2.4 V5.6 L11.5 6.5 L9.9 7.4 V10.6 Q9.9 11.5 9 11.5 H8.3" stroke="#c8c8c8" stroke-width="1.1" fill="none"/></svg>
<div class="a" style="left:287px;top:434px;width:779px;height:19px;background:transparent;border-top:2px solid #282828;border-bottom:2px solid #282828;box-sizing:border-box;"></div>
<div class="a" style="left:286px;top:111px;width:1px;height:380px;background:#404040;"></div>
<div class="a" style="left:317px;top:149px;width:1px;height:171px;background:#404040;"></div>
<div class="a" style="left:317px;top:358px;width:1px;height:114px;background:#404040;"></div>
<div class="a" style="left:348px;top:244px;width:1px;height:57px;background:#404040;"></div>
<div class="a" style="left:348px;top:377px;width:1px;height:76px;background:#404040;"></div>
<div class="a" style="left:200px;top:92px;width:60px;height:19px;text-align:right;font:13.5px 'Liberation Mono', monospace;line-height:19px;letter-spacing:-0.4px;margin-top:1px;color:#6e7681">1</div>
<div class="a" style="left:200px;top:111px;width:60px;height:19px;text-align:right;font:13.5px 'Liberation Mono', monospace;line-height:19px;letter-spacing:-0.4px;margin-top:1px;color:#6e7681">2</div>
<div class="a" style="left:200px;top:130px;width:60px;height:19px;text-align:right;font:13.5px 'Liberation Mono', monospace;line-height:19px;letter-spacing:-0.4px;margin-top:1px;color:#6e7681">3</div>
<div class="a" style="left:200px;top:149px;width:60px;height:19px;text-align:right;font:13.5px 'Liberation Mono', monospace;line-height:19px;letter-spacing:-0.4px;margin-top:1px;color:#6e7681">4</div>
<div class="a" style="left:200px;top:168px;width:60px;height:19px;text-align:right;font:13.5px 'Liberation Mono', monospace;line-height:19px;letter-spacing:-0.4px;margin-top:1px;color:#6e7681">5</div>
<div class="a" style="left:200px;top:187px;width:60px;height:19px;text-align:right;font:13.5px 'Liberation Mono', monospace;line-height:19px;letter-spacing:-0.4px;margin-top:1px;color:#6e7681">6</div>
<div class="a" style="left:200px;top:206px;width:60px;height:19px;text-align:right;font:13.5px 'Liberation Mono', monospace;line-height:19px;letter-spacing:-0.4px;margin-top:1px;color:#6e7681">7</div>
<div class="a" style="left:200px;top:225px;width:60px;height:19px;text-align:right;font:13.5px 'Liberation Mono', monospace;line-height:19px;letter-spacing:-0.4px;margin-top:1px;color:#6e7681">8</div>
<div class="a" style="left:200px;top:244px;width:60px;height:19px;text-align:right;font:13.5px 'Liberation Mono', monospace;line-height:19px;letter-spacing:-0.4px;margin-top:1px;color:#6e7681">9</div>
<div class="a" style="left:200px;top:263px;width:60px;height:19px;text-align:right;font:13.5px 'Liberation Mono', monospace;line-height:19px;letter-spacing:-0.4px;margin-top:1px;color:#6e7681">10</div>
<div class="a" style="left:200px;top:282px;width:60px;height:19px;text-align:right;font:13.5px 'Liberation Mono', monospace;line-height:19px;letter-spacing:-0.4px;margin-top:1px;color:#6e7681">11</div>
<div class="a" style="left:200px;top:301px;width:60px;height:19px;text-align:right;font:13.5px 'Liberation Mono', monospace;line-height:19px;letter-spacing:-0.4px;margin-top:1px;color:#6e7681">12</div>
<div class="a" style="left:200px;top:320px;width:60px;height:19px;text-align:right;font:13.5px 'Liberation Mono', monospace;line-height:19px;letter-spacing:-0.4px;margin-top:1px;color:#6e7681">13</div>
<div class="a" style="left:200px;top:339px;width:60px;height:19px;text-align:right;font:13.5px 'Liberation Mono', monospace;line-height:19px;letter-spacing:-0.4px;margin-top:1px;color:#6e7681">14</div>
<div class="a" style="left:200px;top:358px;width:60px;height:19px;text-align:right;font:13.5px 'Liberation Mono', monospace;line-height:19px;letter-spacing:-0.4px;margin-top:1px;color:#6e7681">15</div>
<div class="a" style="left:200px;top:377px;width:60px;height:19px;text-align:right;font:13.5px 'Liberation Mono', monospace;line-height:19px;letter-spacing:-0.4px;margin-top:1px;color:#6e7681">16</div>
<div class="a" style="left:200px;top:396px;width:60px;height:19px;text-align:right;font:13.5px 'Liberation Mono', monospace;line-height:19px;letter-spacing:-0.4px;margin-top:1px;color:#6e7681">17</div>
<div class="a" style="left:200px;top:415px;width:60px;height:19px;text-align:right;font:13.5px 'Liberation Mono', monospace;line-height:19px;letter-spacing:-0.4px;margin-top:1px;color:#6e7681">18</div>
<div class="a" style="left:200px;top:434px;width:60px;height:19px;text-align:right;font:13.5px 'Liberation Mono', monospace;line-height:19px;letter-spacing:-0.4px;margin-top:1px;color:#cccccc">19</div>
<div class="a" style="left:200px;top:453px;width:60px;height:19px;text-align:right;font:13.5px 'Liberation Mono', monospace;line-height:19px;letter-spacing:-0.4px;margin-top:1px;color:#6e7681">20</div>
<div class="a" style="left:200px;top:472px;width:60px;height:19px;text-align:right;font:13.5px 'Liberation Mono', monospace;line-height:19px;letter-spacing:-0.4px;margin-top:1px;color:#6e7681">21</div>
<div class="a" style="left:200px;top:491px;width:60px;height:19px;text-align:right;font:13.5px 'Liberation Mono', monospace;line-height:19px;letter-spacing:-0.4px;margin-top:1px;color:#6e7681">22</div>
<div class="a code" style="left:286.0px;top:92px;"><span style="color:#ffd700">{</span></div>
<div class="a code" style="left:316.8px;top:111px;"><span style="color:#9cdcfe">&quot;format_version&quot;</span><span style="color:#cccccc">: </span><span style="color:#b5cea8">2</span><span style="color:#cccccc">,</span></div>
<div class="a code" style="left:316.8px;top:130px;"><span style="color:#9cdcfe">&quot;header&quot;</span><span style="color:#cccccc">: </span><span style="color:#da70d6">{</span></div>
<div class="a code" style="left:347.6px;top:149px;"><span style="color:#9cdcfe">&quot;description&quot;</span><span style="color:#cccccc">: </span><span style="color:#ce9178">&quot;メイドの料理&quot;</span><span style="color:#cccccc">,</span></div>
<div class="a code" style="left:347.6px;top:168px;"><span style="color:#9cdcfe">&quot;name&quot;</span><span style="color:#cccccc">: </span><span style="color:#ce9178">&quot;メイドの料理&quot;</span><span style="color:#cccccc">,</span></div>
<div class="a code" style="left:347.6px;top:187px;"><span style="color:#9cdcfe">&quot;uuid&quot;</span><span style="color:#cccccc">: </span><span style="color:#ce9178">&quot;3851f6a2-637d-451a-b873-23e86318049f&quot;</span><span style="color:#cccccc">,</span></div>
<div class="a code" style="left:378.4px;top:263px;"><span style="color:#b5cea8">21</span><span style="color:#cccccc">,</span></div>
<div class="a code" style="left:378.4px;top:282px;"><span style="color:#b5cea8">0</span></div>
<div class="a code" style="left:347.6px;top:301px;"><span style="color:#179fff">]</span></div>
<div class="a code" style="left:316.8px;top:320px;"><span style="color:#da70d6">}</span><span style="color:#cccccc">,</span></div>
<div class="a code" style="left:316.8px;top:339px;"><span style="color:#9cdcfe">&quot;modules&quot;</span><span style="color:#cccccc">: </span><span style="color:#da70d6">[</span></div>
<div class="a code" style="left:347.6px;top:358px;"><span style="color:#179fff">{</span></div>
<div class="a code" style="left:378.4px;top:377px;"><span style="color:#9cdcfe">&quot;description&quot;</span><span style="color:#cccccc">: </span><span style="color:#ce9178">&quot;メイドの料理&quot;</span><span style="color:#cccccc">,</span></div>
<div class="a code" style="left:378.4px;top:396px;"><span style="color:#9cdcfe">&quot;type&quot;</span><span style="color:#cccccc">: </span><span style="color:#ce9178">&quot;data&quot;</span><span style="color:#cccccc">,</span></div>
<div class="a code" style="left:378.4px;top:415px;"><span style="color:#9cdcfe">&quot;uuid&quot;</span><span style="color:#cccccc">: </span><span style="color:#ce9178">&quot;ae4dfdf1-a868-467f-968d-718feaa7241d&quot;</span><span style="color:#cccccc">,</span></div>
<div class="a code" style="left:378.4px;top:434px;"><span style="color:#9cdcfe">&quot;version&quot;</span><span style="color:#cccccc">:</span><span style="color:#ffd700">[</span><span style="color:#b5cea8">1</span><span style="color:#cccccc">,</span><span style="color:#b5cea8">0</span><span style="color:#cccccc">,</span><span style="color:#b5cea8">0</span><span style="color:#ffd700">]</span></div>
<div class="a code" style="left:347.6px;top:453px;"><span style="color:#179fff">}</span></div>
<div class="a code" style="left:316.8px;top:472px;"><span style="color:#da70d6">]</span></div>
<div class="a code" style="left:286.0px;top:491px;"><span style="color:#ffd700">}</span></div>
<svg class="a" style="left:1074px;top:0px;" width="120" height="140" viewBox="0 0 120 140"><rect x="0.15" y="92.3" width="0.65" height="1.3" fill="#cccccc" opacity="0.65"/><rect x="4.15" y="94.3" width="0.65" height="1.3" fill="#9cdcfe" opacity="0.65"/><rect x="5.15" y="94.3" width="0.65" height="1.3" fill="#9cdcfe" opacity="0.65"/><rect x="6.15" y="94.3" width="0.65" height="1.3" fill="#9cdcfe" opacity="0.65"/><rect x="7.15" y="94.3" width="0.65" height="1.3" fill="#9cdcfe" opacity="0.65"/><rect x="8.15" y="94.3" width="0.65" height="1.3" fill="#9cdcfe" opacity="0.65"/><rect x="9.15" y="94.3" width="0.65" height="1.3" fill="#9cdcfe" opacity="0.65"/><rect x="10.15" y="94.3" width="0.65" height="1.3" fill="#9cdcfe" opacity="0.65"/><rect x="11.15" y="94.3" width="0.65" height="1.3" fill="#9cdcfe" opacity="0.65"/><rect x="12.15" y="94.3" width="0.65" height="1.3" fill="#9cdcfe" opacity="0.65"/><rect x="13.15" y="94.3" width="0.65" height="1.3" fill="#9cdcfe" opacity="0.65"/><rect x="14.15" y="94.3" width="0.65" height="1.3" fill="#9cdcfe" opacity="0.65"/><rect x="15.15" y="94.3" width="0.65" height="1.3" fill="#9cdcfe" opacity="0.65"/><rect x="16.15" y="94.3" width="0.65" height="1.3" fill="#9cdcfe" opacity="0.65"/><rect x="17.15" y="94.3" width="0.65" height="1.3" fill="#9cdcfe" opacity="0.65"/><rect x="18.15" y="94.3" width="0.65" height="1.3" fill="#9cdcfe" opacity="0.65"/><rect x="19.15" y="94.3" width="0.65" height="1.3" fill="#9cdcfe" opacity="0.65"/><rect x="20.15" y="94.3" width="0.65" height="1.3" fill="#cccccc" opacity="0.65"/><rect x="22.15" y="94.3" width="0.65" height="1.3" fill="#b5cea8" opacity="0.65"/><rect x="23.15" y="94.3" width="0.65" height="1.3" fill="#cccccc" opacity="0.65"/><rect x="4.15" y="96.3" width="0.65" height="1.3" fill="#9cdcfe" opacity="0.65"/><rect x="5.15" y="96.3" width="0.65" height="1.3" fill="#9cdcfe" opacity="0.65"/><rect x="6.15" y="96.3" width="0.65" height="1.3" fill="#9cdcfe" opacity="0.65"/><rect x="7.15" y="96.3" width="0.65" height="1.3" fill="#9cdcfe" opacity="0.65"/><rect x="8.15" y="96.3" width="0.65" height="1.3" fill="#9cdcfe" opacity="0.65"/><rect x="9.15" y="96.3" width="0.65" height="1.3" fill="#9cdcfe" opacity="0.65"/><rect x="10.15" y="96.3" width="0.65" height="1.3" fill="#9cdcfe" opacity="0.65"/><rect x="11.15" y="96.3" width="0.65" height="1.3" fill="#9cdcfe" opacity="0.65"/><rect x="12.15" y="96.3" width="0.65" height="1.3" fill="#cccccc" opacity="0.65"/><rect x="14.15" y="96.3" width="0.65" height="1.3" fill="#cccccc" opacity="0.65"/><rect x="8.15" y="98.3" width="0.65" height="1.3" fill="#9cdcfe" opacity="0.65"/><rect x="9.15" y="98.3" width="0.65" height="1.3" fill="#9cdcfe" opacity="0.65"/><rect x="10.15" y="98.3" width="0.65" height="1.3" fill="#9cdcfe" opacity="0.65"/><rect x="11.15" y="98.3" width="0.65" height="1.3" fill="#9cdcfe" opacity="0.65"/><rect x="12.15" y="98.3" width="0.65" height="1.3" fill="#9cdcfe" opacity="0.65"/><rect x="13.15" y="98.3" width="0.65" height="1.3" fill="#9cdcfe" opacity="0.65"/><rect x="14.15" y="98.3" width="0.65" height="1.3" fill="#9cdcfe" opacity="0.65"/><rect x="15.15" y="98.3" width="0.65" height="1.3" fill="#9cdcfe" opacity="0.65"/><rect x="16.15" y="98.3" width="0.65" height="1.3" fill="#9cdcfe" opacity="0.65"/><rect x="17.15" y="98.3" width="0.65" height="1.3" fill="#9cdcfe" opacity="0.65"/><rect x="18.15" y="98.3" width="0.65" height="1.3" fill="#9cdcfe" opacity="0.65"/><rect x="19.15" y="98.3" width="0.65" height="1.3" fill="#9cdcfe" opacity="0.65"/><rect x="20.15" y="98.3" width="0.65" height="1.3" fill="#9cdcfe" opacity="0.65"/><rect x="21.15" y="98.3" width="0.65" height="1.3" fill="#cccccc" opacity="0.65"/><rect x="23.15" y="98.3" width="0.65" height="1.3" fill="#ce9178" opacity="0.65"/><rect x="24.15" y="98.3" width="1.65" height="1.3" fill="#ce9178" opacity="0.65"/><rect x="26.15" y="98.3" width="1.65" height="1.3" fill="#ce9178" opacity="0.65"/><rect x="28.15" y="98.3" width="1.65" height="1.3" fill="#ce9178" opacity="0.65"/><rect x="30.15" y="98.3" width="1.65" height="1.3" fill="#ce9178" opacity="0.65"/><rect x="32.15" y="98.3" width="1.65" height="1.3" fill="#ce9178" opacity="0.65"/><rect x="34.15" y="98.3" width="1.65" height="1.3" fill="#ce9178" opacity="0.65"/><rect x="36.15" y="98.3" width="0.65" height="1.3" fill="#ce9178" opacity="0.65"/><rect x="37.15" y="98.3" width="0.65" height="1.3" fill="#cccccc" opacity="0.65"/><rect x="8.15" y="100.3" width="0.65" height="1.3" fill="#9cdcfe" opacity="0.65"/><rect x="9.15" y="100.3" width="0.65" height="1.3" fill="#9cdcfe" opacity="0.65"/><rect x="10.15" y="100.3" width="0.65" height="1.3" fill="#9cdcfe" opacity="0.65"/><rect x="11.15" y="100.3" width="0.65" height="1.3" fill="#9cdcfe" opacity="0.65"/><rect x="12.15" y="100.3" width="0.65" height="1.3" fill="#9cdcfe" opacity="0.65"/><rect x="13.15" y="100.3" width="0.65" height="1.3" fill="#9cdcfe" opacity="0.65"/><rect x="14.15" y="100.3" width="0.65" height="1.3" fill="#cccccc" opacity="0.65"/><rect x="16.15" y="100.3" width="0.65" height="1.3" fill="#ce9178" opacity="0.65"/><rect x="17.15" y="100.3" width="1.65" height="1.3" fill="#ce9178" opacity="0.65"/><rect x="19.15" y="100.3" width="1.65" height="1.3" fill="#ce9178" opacity="0.65"/><rect x="21.15" y="100.3" width="1.65" height="1.3" fill="#ce9178" opacity="0.65"/><rect x="23.15" y="100.3" width="1.65" height="1.3" fill="#ce9178" opacity="0.65"/><rect x="25.15" y="100.3" width="1.65" height="1.3" fill="#ce9178" opacity="0.65"/><rect x="27.15" y="100.3" width="1.65" height="1.3" fill="#ce9178" opacity="0.65"/><rect x="29.15" y="100.3" width="0.65" height="1.3" fill="#ce9178" opacity="0.65"/><rect x="30.15" y="100.3" width="0.65" height="1.3" fill="#cccccc" opacity="0.65"/><rect x="8.15" y="102.3" width="0.65" height="1.3" fill="#9cdcfe" opacity="0.65"/><rect x="9.15" y="102.3" width="0.65" height="1.3" fill="#9cdcfe" opacity="0.65"/><rect x="10.15" y="102.3" width="0.65" height="1.3" fill="#9cdcfe" opacity="0.65"/><rect x="11.15" y="102.3" width="0.65" height="1.3" fill="#9cdcfe" opacity="0.65"/><rect x="12.15" y="102.3" width="0.65" height="1.3" fill="#9cdcfe" opacity="0.65"/><rect x="13.15" y="102.3" width="0.65" height="1.3" fill="#9cdcfe" opacity="0.65"/><rect x="14.15" y="102.3" width="0.65" height="1.3" fill="#cccccc" opacity="0.65"/><rect x="16.15" y="102.3" width="0.65" height="1.3" fill="#ce9178" opacity="0.65"/><rect x="17.15" y="102.3" width="0.65" height="1.3" fill="#ce9178" opacity="0.65"/><rect x="18.15" y="102.3" width="0.65" height="1.3" fill="#ce9178" opacity="0.65"/><rect x="19.15" y="102.3" width="0.65" height="1.3" fill="#ce9178" opacity="0.65"/><rect x="20.15" y="102.3" width="0.65" height="1.3" fill="#ce9178" opacity="0.65"/><rect x="21.15" y="102.3" width="0.65" height="1.3" fill="#ce9178" opacity="0.65"/><rect x="22.15" y="102.3" width="0.65" height="1.3" fill="#ce9178" opacity="0.65"/><rect x="23.15" y="102.3" width="0.65" height="1.3" fill="#ce9178" opacity="0.65"/><rect x="24.15" y="102.3" width="0.65" height="1.3" fill="#ce9178" opacity="0.65"/><rect x="25.15" y="102.3" width="0.65" height="1.3" fill="#ce9178" opacity="0.65"/><rect x="26.15" y="102.3" width="0.65" height="1.3" fill="#ce9178" opacity="0.65"/><rect x="27.15" y="102.3" width="0.65" height="1.3" fill="#ce9178" opacity="0.65"/><rect x="28.15" y="102.3" width="0.65" height="1.3" fill="#ce9178" opacity="0.65"/><rect x="29.15" y="102.3" width="0.65" height="1.3" fill="#ce9178" opacity="0.65"/><rect x="30.15" y="102.3" width="0.65" height="1.3" fill="#ce9178" opacity="0.65"/><rect x="31.15" y="102.3" width="0.65" height="1.3" fill="#ce9178" opacity="0.65"/><rect x="32.15" y="102.3" width="0.65" height="1.3" fill="#ce9178" opacity="0.65"/><rect x="33.15" y="102.3" width="0.65" height="1.3" fill="#ce9178" opacity="0.65"/><rect x="34.15" y="102.3" width="0.65" height="1.3" fill="#ce9178" opacity="0.65"/><rect x="35.15" y="102.3" width="0.65" height="1.3" fill="#ce9178" opacity="0.65"/><rect x="36.15" y="102.3" width="0.65" height="1.3" fill="#ce9178" opacity="0.65"/><rect x="37.15" y="102.3" width="0.65" height="1.3" fill="#ce9178" opacity="0.65"/><rect x="38.15" y="102.3" width="0.65" height="1.3" fill="#ce9178" opacity="0.65"/><rect x="39.15" y="102.3" width="0.65" height="1.3" fill="#ce9178" opacity="0.65"/><rect x="40.15" y="102.3" width="0.65" height="1.3" fill="#ce9178" opacity="0.65"/><rect x="41.15" y="102.3" width="0.65" height="1.3" fill="#ce9178" opacity="0.65"/><rect x="42.15" y="102.3" width="0.65" height="1.3" fill="#ce9178" opacity="0.65"/><rect x="43.15" y="102.3" width="0.65" height="1.3" fill="#ce9178" opacity="0.65"/><rect x="44.15" y="102.3" width="0.65" height="1.3" fill="#ce9178" opacity="0.65"/><rect x="45.15" y="102.3" width="0.65" height="1.3" fill="#ce9178" opacity="0.65"/><rect x="46.15" y="102.3" width="0.65" height="1.3" fill="#ce9178" opacity="0.65"/><rect x="47.15" y="102.3" width="0.65" height="1.3" fill="#ce9178" opacity="0.65"/><rect x="48.15" y="102.3" width="0.65" height="1.3" fill="#ce9178" opacity="0.65"/><rect x="49.15" y="102.3" width="0.65" height="1.3" fill="#ce9178" opacity="0.65"/><rect x="50.15" y="102.3" width="0.65" height="1.3" fill="#ce9178" opacity="0.65"/><rect x="51.15" y="102.3" width="0.65" height="1.3" fill="#ce9178" opacity="0.65"/><rect x="52.15" y="102.3" width="0.65" height="1.3" fill="#ce9178" opacity="0.65"/><rect x="53.15" y="102.3" width="0.65" height="1.3" fill="#ce9178" opacity="0.65"/><rect x="54.15" y="102.3" width="0.65" height="1.3" fill="#cccccc" opacity="0.65"/><rect x="12.15" y="110.3" width="0.65" height="1.3" fill="#b5cea8" opacity="0.65"/><rect x="13.15" y="110.3" width="0.65" height="1.3" fill="#b5cea8" opacity="0.65"/><rect x="14.15" y="110.3" width="0.65" height="1.3" fill="#cccccc" opacity="0.65"/><rect x="12.15" y="112.3" width="0.65" height="1.3" fill="#b5cea8" opacity="0.65"/><rect x="8.15" y="114.3" width="0.65" height="1.3" fill="#cccccc" opacity="0.65"/><rect x="4.15" y="116.3" width="0.65" height="1.3" fill="#cccccc" opacity="0.65"/><rect x="5.15" y="116.3" width="0.65" height="1.3" fill="#cccccc" opacity="0.65"/><rect x="4.15" y="118.3" width="0.65" height="1.3" fill="#9cdcfe" opacity="0.65"/><rect x="5.15" y="118.3" width="0.65" height="1.3" fill="#9cdcfe" opacity="0.65"/><rect x="6.15" y="118.3" width="0.65" height="1.3" fill="#9cdcfe" opacity="0.65"/><rect x="7.15" y="118.3" width="0.65" height="1.3" fill="#9cdcfe" opacity="0.65"/><rect x="8.15" y="118.3" width="0.65" height="1.3" fill="#9cdcfe" opacity="0.65"/><rect x="9.15" y="118.3" width="0.65" height="1.3" fill="#9cdcfe" opacity="0.65"/><rect x="10.15" y="118.3" width="0.65" height="1.3" fill="#9cdcfe" opacity="0.65"/><rect x="11.15" y="118.3" width="0.65" height="1.3" fill="#9cdcfe" opacity="0.65"/><rect x="12.15" y="118.3" width="0.65" height="1.3" fill="#9cdcfe" opacity="0.65"/><rect x="13.15" y="118.3" width="0.65" height="1.3" fill="#cccccc" opacity="0.65"/><rect x="15.15" y="118.3" width="0.65" height="1.3" fill="#cccccc" opacity="0.65"/><rect x="8.15" y="120.3" width="0.65" height="1.3" fill="#cccccc" opacity="0.65"/><rect x="12.15" y="122.3" width="0.65" height="1.3" fill="#9cdcfe" opacity="0.65"/><rect x="13.15" y="122.3" width="0.65" height="1.3" fill="#9cdcfe" opacity="0.65"/><rect x="14.15" y="122.3" width="0.65" height="1.3" fill="#9cdcfe" opacity="0.65"/><rect x="15.15" y="122.3" width="0.65" height="1.3" fill="#9cdcfe" opacity="0.65"/><rect x="16.15" y="122.3" width="0.65" height="1.3" fill="#9cdcfe" opacity="0.65"/><rect x="17.15" y="122.3" width="0.65" height="1.3" fill="#9cdcfe" opacity="0.65"/><rect x="18.15" y="122.3" width="0.65" height="1.3" fill="#9cdcfe" opacity="0.65"/><rect x="19.15" y="122.3" width="0.65" height="1.3" fill="#9cdcfe" opacity="0.65"/><rect x="20.15" y="122.3" width="0.65" height="1.3" fill="#9cdcfe" opacity="0.65"/><rect x="21.15" y="122.3" width="0.65" height="1.3" fill="#9cdcfe" opacity="0.65"/><rect x="22.15" y="122.3" width="0.65" height="1.3" fill="#9cdcfe" opacity="0.65"/><rect x="23.15" y="122.3" width="0.65" height="1.3" fill="#9cdcfe" opacity="0.65"/><rect x="24.15" y="122.3" width="0.65" height="1.3" fill="#9cdcfe" opacity="0.65"/><rect x="25.15" y="122.3" width="0.65" height="1.3" fill="#cccccc" opacity="0.65"/><rect x="27.15" y="122.3" width="0.65" height="1.3" fill="#ce9178" opacity="0.65"/><rect x="28.15" y="122.3" width="1.65" height="1.3" fill="#ce9178" opacity="0.65"/><rect x="30.15" y="122.3" width="1.65" height="1.3" fill="#ce9178" opacity="0.65"/><rect x="32.15" y="122.3" width="1.65" height="1.3" fill="#ce9178" opacity="0.65"/><rect x="34.15" y="122.3" width="1.65" height="1.3" fill="#ce9178" opacity="0.65"/><rect x="36.15" y="122.3" width="1.65" height="1.3" fill="#ce9178" opacity="0.65"/><rect x="38.15" y="122.3" width="1.65" height="1.3" fill="#ce9178" opacity="0.65"/><rect x="40.15" y="122.3" width="0.65" height="1.3" fill="#ce9178" opacity="0.65"/><rect x="41.15" y="122.3" width="0.65" height="1.3" fill="#cccccc" opacity="0.65"/><rect x="12.15" y="124.3" width="0.65" height="1.3" fill="#9cdcfe" opacity="0.65"/><rect x="13.15" y="124.3" width="0.65" height="1.3" fill="#9cdcfe" opacity="0.65"/><rect x="14.15" y="124.3" width="0.65" height="1.3" fill="#9cdcfe" opacity="0.65"/><rect x="15.15" y="124.3" width="0.65" height="1.3" fill="#9cdcfe" opacity="0.65"/><rect x="16.15" y="124.3" width="0.65" height="1.3" fill="#9cdcfe" opacity="0.65"/><rect x="17.15" y="124.3" width="0.65" height="1.3" fill="#9cdcfe" opacity="0.65"/><rect x="18.15" y="124.3" width="0.65" height="1.3" fill="#cccccc" opacity="0.65"/><rect x="20.15" y="124.3" width="0.65" height="1.3" fill="#ce9178" opacity="0.65"/><rect x="21.15" y="124.3" width="0.65" height="1.3" fill="#ce9178" opacity="0.65"/><rect x="22.15" y="124.3" width="0.65" height="1.3" fill="#ce9178" opacity="0.65"/><rect x="23.15" y="124.3" width="0.65" height="1.3" fill="#ce9178" opacity="0.65"/><rect x="24.15" y="124.3" width="0.65" height="1.3" fill="#ce9178" opacity="0.65"/><rect x="25.15" y="124.3" width="0.65" height="1.3" fill="#ce9178" opacity="0.65"/><rect x="26.15" y="124.3" width="0.65" height="1.3" fill="#cccccc" opacity="0.65"/><rect x="12.15" y="126.3" width="0.65" height="1.3" fill="#9cdcfe" opacity="0.65"/><rect x="13.15" y="126.3" width="0.65" height="1.3" fill="#9cdcfe" opacity="0.65"/><rect x="14.15" y="126.3" width="0.65" height="1.3" fill="#9cdcfe" opacity="0.65"/><rect x="15.15" y="126.3" width="0.65" height="1.3" fill="#9cdcfe" opacity="0.65"/><rect x="16.15" y="126.3" width="0.65" height="1.3" fill="#9cdcfe" opacity="0.65"/><rect x="17.15" y="126.3" width="0.65" height="1.3" fill="#9cdcfe" opacity="0.65"/><rect x="18.15" y="126.3" width="0.65" height="1.3" fill="#cccccc" opacity="0.65"/><rect x="20.15" y="126.3" width="0.65" height="1.3" fill="#ce9178" opacity="0.65"/><rect x="21.15" y="126.3" width="0.65" height="1.3" fill="#ce9178" opacity="0.65"/><rect x="22.15" y="126.3" width="0.65" height="1.3" fill="#ce9178" opacity="0.65"/><rect x="23.15" y="126.3" width="0.65" height="1.3" fill="#ce9178" opacity="0.65"/><rect x="24.15" y="126.3" width="0.65" height="1.3" fill="#ce9178" opacity="0.65"/><rect x="25.15" y="126.3" width="0.65" height="1.3" fill="#ce9178" opacity="0.65"/><rect x="26.15" y="126.3" width="0.65" height="1.3" fill="#ce9178" opacity="0.65"/><rect x="27.15" y="126.3" width="0.65" height="1.3" fill="#ce9178" opacity="0.65"/><rect x="28.15" y="126.3" width="0.65" height="1.3" fill="#ce9178" opacity="0.65"/><rect x="29.15" y="126.3" width="0.65" height="1.3" fill="#ce9178" opacity="0.65"/><rect x="30.15" y="126.3" width="0.65" height="1.3" fill="#ce9178" opacity="0.65"/><rect x="31.15" y="126.3" width="0.65" height="1.3" fill="#ce9178" opacity="0.65"/><rect x="32.15" y="126.3" width="0.65" height="1.3" fill="#ce9178" opacity="0.65"/><rect x="33.15" y="126.3" width="0.65" height="1.3" fill="#ce9178" opacity="0.65"/><rect x="34.15" y="126.3" width="0.65" height="1.3" fill="#ce9178" opacity="0.65"/><rect x="35.15" y="126.3" width="0.65" height="1.3" fill="#ce9178" opacity="0.65"/><rect x="36.15" y="126.3" width="0.65" height="1.3" fill="#ce9178" opacity="0.65"/><rect x="37.15" y="126.3" width="0.65" height="1.3" fill="#ce9178" opacity="0.65"/><rect x="38.15" y="126.3" width="0.65" height="1.3" fill="#ce9178" opacity="0.65"/><rect x="39.15" y="126.3" width="0.65" height="1.3" fill="#ce9178" opacity="0.65"/><rect x="40.15" y="126.3" width="0.65" height="1.3" fill="#ce9178" opacity="0.65"/><rect x="41.15" y="126.3" width="0.65" height="1.3" fill="#ce9178" opacity="0.65"/><rect x="42.15" y="126.3" width="0.65" height="1.3" fill="#ce9178" opacity="0.65"/><rect x="43.15" y="126.3" width="0.65" height="1.3" fill="#ce9178" opacity="0.65"/><rect x="44.15" y="126.3" width="0.65" height="1.3" fill="#ce9178" opacity="0.65"/><rect x="45.15" y="126.3" width="0.65" height="1.3" fill="#ce9178" opacity="0.65"/><rect x="46.15" y="126.3" width="0.65" height="1.3" fill="#ce9178" opacity="0.65"/><rect x="47.15" y="126.3" width="0.65" height="1.3" fill="#ce9178" opacity="0.65"/><rect x="48.15" y="126.3" width="0.65" height="1.3" fill="#ce9178" opacity="0.65"/><rect x="49.15" y="126.3" width="0.65" height="1.3" fill="#ce9178" opacity="0.65"/><rect x="50.15" y="126.3" width="0.65" height="1.3" fill="#ce9178" opacity="0.65"/><rect x="51.15" y="126.3" width="0.65" height="1.3" fill="#ce9178" opacity="0.65"/><rect x="52.15" y="126.3" width="0.65" height="1.3" fill="#ce9178" opacity="0.65"/><rect x="53.15" y="126.3" width="0.65" height="1.3" fill="#ce9178" opacity="0.65"/><rect x="54.15" y="126.3" width="0.65" height="1.3" fill="#ce9178" opacity="0.65"/><rect x="55.15" y="126.3" width="0.65" height="1.3" fill="#ce9178" opacity="0.65"/><rect x="56.15" y="126.3" width="0.65" height="1.3" fill="#ce9178" opacity="0.65"/><rect x="57.15" y="126.3" width="0.65" height="1.3" fill="#ce9178" opacity="0.65"/><rect x="58.15" y="126.3" width="0.65" height="1.3" fill="#cccccc" opacity="0.65"/><rect x="12.15" y="128.3" width="0.65" height="1.3" fill="#9cdcfe" opacity="0.65"/><rect x="13.15" y="128.3" width="0.65" height="1.3" fill="#9cdcfe" opacity="0.65"/><rect x="14.15" y="128.3" width="0.65" height="1.3" fill="#9cdcfe" opacity="0.65"/><rect x="15.15" y="128.3" width="0.65" height="1.3" fill="#9cdcfe" opacity="0.65"/><rect x="16.15" y="128.3" width="0.65" height="1.3" fill="#9cdcfe" opacity="0.65"/><rect x="17.15" y="128.3" width="0.65" height="1.3" fill="#9cdcfe" opacity="0.65"/><rect x="18.15" y="128.3" width="0.65" height="1.3" fill="#9cdcfe" opacity="0.65"/><rect x="19.15" y="128.3" width="0.65" height="1.3" fill="#9cdcfe" opacity="0.65"/><rect x="20.15" y="128.3" width="0.65" height="1.3" fill="#9cdcfe" opacity="0.65"/><rect x="21.15" y="128.3" width="0.65" height="1.3" fill="#cccccc" opacity="0.65"/><rect x="22.15" y="128.3" width="0.65" height="1.3" fill="#cccccc" opacity="0.65"/><rect x="23.15" y="128.3" width="0.65" height="1.3" fill="#b5cea8" opacity="0.65"/><rect x="24.15" y="128.3" width="0.65" height="1.3" fill="#cccccc" opacity="0.65"/><rect x="25.15" y="128.3" width="0.65" height="1.3" fill="#b5cea8" opacity="0.65"/><rect x="26.15" y="128.3" width="0.65" height="1.3" fill="#cccccc" opacity="0.65"/><rect x="27.15" y="128.3" width="0.65" height="1.3" fill="#b5cea8" opacity="0.65"/><rect x="28.15" y="128.3" width="0.65" height="1.3" fill="#cccccc" opacity="0.65"/><rect x="8.15" y="130.3" width="0.65" height="1.3" fill="#cccccc" opacity="0.65"/><rect x="4.15" y="132.3" width="0.65" height="1.3" fill="#cccccc" opacity="0.65"/><rect x="0.15" y="134.3" width="0.65" height="1.3" fill="#cccccc" opacity="0.65"/><rect x="8.15" y="104.3" width="0.65" height="1.3" fill="#9cdcfe" opacity="0.65"/><rect x="9.15" y="104.3" width="0.65" height="1.3" fill="#9cdcfe" opacity="0.65"/><rect x="10.15" y="104.3" width="0.65" height="1.3" fill="#9cdcfe" opacity="0.65"/><rect x="11.15" y="104.3" width="0.65" height="1.3" fill="#9cdcfe" opacity="0.65"/><rect x="12.15" y="104.3" width="0.65" height="1.3" fill="#9cdcfe" opacity="0.65"/><rect x="13.15" y="104.3" width="0.65" height="1.3" fill="#9cdcfe" opacity="0.65"/><rect x="14.15" y="104.3" width="0.65" height="1.3" fill="#9cdcfe" opacity="0.65"/><rect x="15.15" y="104.3" width="0.65" height="1.3" fill="#9cdcfe" opacity="0.65"/><rect x="16.15" y="104.3" width="0.65" height="1.3" fill="#9cdcfe" opacity="0.65"/><rect x="17.15" y="104.3" width="0.65" height="1.3" fill="#cccccc" opacity="0.65"/><rect x="19.15" y="104.3" width="0.65" height="1.3" fill="#cccccc" opacity="0.65"/><rect x="20.15" y="104.3" width="0.65" height="1.3" fill="#b5cea8" opacity="0.65"/><rect x="21.15" y="104.3" width="0.65" height="1.3" fill="#b5cea8" opacity="0.65"/><rect x="23.15" y="104.3" width="0.65" height="1.3" fill="#b5cea8" opacity="0.65"/><rect x="24.15" y="104.3" width="0.65" height="1.3" fill="#b5cea8" opacity="0.65"/><rect x="26.15" y="104.3" width="0.65" height="1.3" fill="#b5cea8" opacity="0.65"/><rect x="27.15" y="104.3" width="0.65" height="1.3" fill="#cccccc" opacity="0.65"/><rect x="28.15" y="104.3" width="0.65" height="1.3" fill="#cccccc" opacity="0.65"/><rect x="8.15" y="106.3" width="0.65" height="1.3" fill="#9cdcfe" opacity="0.65"/><rect x="9.15" y="106.3" width="0.65" height="1.3" fill="#9cdcfe" opacity="0.65"/><rect x="10.15" y="106.3" width="0.65" height="1.3" fill="#9cdcfe" opacity="0.65"/><rect x="11.15" y="106.3" width="0.65" height="1.3" fill="#9cdcfe" opacity="0.65"/><rect x="12.15" y="106.3" width="0.65" height="1.3" fill="#9cdcfe" opacity="0.65"/><rect x="13.15" y="106.3" width="0.65" height="1.3" fill="#9cdcfe" opacity="0.65"/><rect x="14.15" y="106.3" width="0.65" height="1.3" fill="#9cdcfe" opacity="0.65"/><rect x="15.15" y="106.3" width="0.65" height="1.3" fill="#9cdcfe" opacity="0.65"/><rect x="16.15" y="106.3" width="0.65" height="1.3" fill="#9cdcfe" opacity="0.65"/><rect x="17.15" y="106.3" width="0.65" height="1.3" fill="#9cdcfe" opacity="0.65"/><rect x="18.15" y="106.3" width="0.65" height="1.3" fill="#9cdcfe" opacity="0.65"/><rect x="19.15" y="106.3" width="0.65" height="1.3" fill="#9cdcfe" opacity="0.65"/><rect x="20.15" y="106.3" width="0.65" height="1.3" fill="#9cdcfe" opacity="0.65"/><rect x="21.15" y="106.3" width="0.65" height="1.3" fill="#9cdcfe" opacity="0.65"/><rect x="22.15" y="106.3" width="0.65" height="1.3" fill="#9cdcfe" opacity="0.65"/><rect x="23.15" y="106.3" width="0.65" height="1.3" fill="#9cdcfe" opacity="0.65"/><rect x="24.15" y="106.3" width="0.65" height="1.3" fill="#9cdcfe" opacity="0.65"/><rect x="25.15" y="106.3" width="0.65" height="1.3" fill="#9cdcfe" opacity="0.65"/><rect x="26.15" y="106.3" width="0.65" height="1.3" fill="#9cdcfe" opacity="0.65"/><rect x="27.15" y="106.3" width="0.65" height="1.3" fill="#9cdcfe" opacity="0.65"/><rect x="28.15" y="106.3" width="0.65" height="1.3" fill="#cccccc" opacity="0.65"/><rect x="30.15" y="106.3" width="0.65" height="1.3" fill="#cccccc" opacity="0.65"/><rect x="12.15" y="108.3" width="0.65" height="1.3" fill="#b5cea8" opacity="0.65"/><rect x="13.15" y="108.3" width="0.65" height="1.3" fill="#cccccc" opacity="0.65"/></svg>
<div class="a" style="left:1175px;top:92px;width:1px;height:845px;background:#151515;"></div>
<div class="a" style="left:1176px;top:329px;width:5px;height:2px;background:#a0a0a0;"></div>
<div class="a" style="left:111px;top:202px;width:517px;height:63px;background:#202020;border:1px solid #454545;border-radius:4px;box-sizing:border-box;box-shadow:0 2px 8px rgba(0,0,0,0.36)"></div>
<div class="a t" style="left:119px;top:205.5px;height:19px;font:normal normal 13px 'Liberation Sans', sans-serif;line-height:19px;color:#cccccc;transform:scaleX(0.9252);transform-origin:0 0;">C:\Users\19802\AppData\Roaming\Minecraft</div>
<div class="a t" style="left:119px;top:224.5px;height:19px;font:normal normal 13px 'Liberation Sans', sans-serif;line-height:19px;color:#cccccc;transform:scaleX(0.8959);transform-origin:0 0;">Bedrock\Users\Shared\games\com.mojang\development_behavior_packs • 強調された項目を含</div>
<div class="a t" style="left:119px;top:243.5px;height:19px;font:normal normal 13px 'Liberation Sans', sans-serif;line-height:19px;color:#cccccc;transform:scaleX(0.7692);transform-origin:0 0;">む</div>
</body></html>
